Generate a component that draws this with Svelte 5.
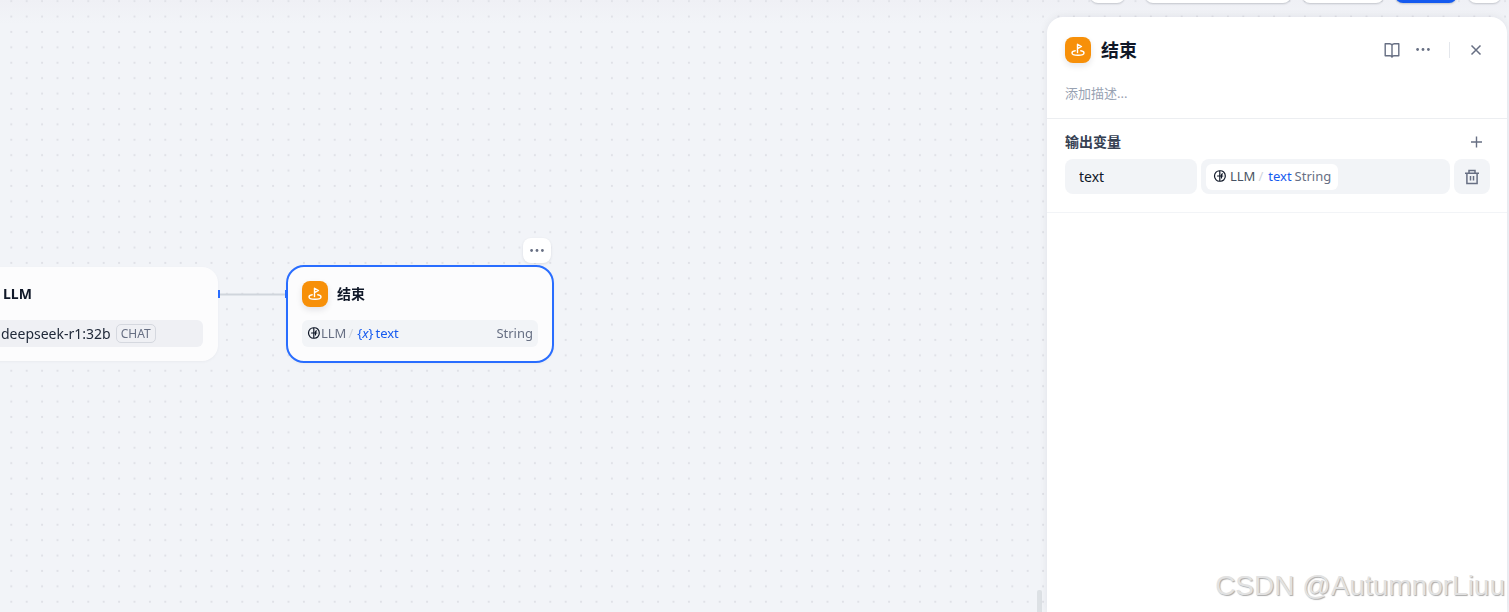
<script lang="ts">
	interface Output {
		name: string;
		source: string;
		variable: string;
		type: string;
	}

	let outputs = $state<Output[]>([
		{ name: 'text', source: 'LLM', variable: 'text', type: 'String' }
	]);
	let description = $state('');
	let open = $state(true);

	function addOutput() {
		outputs.push({ name: '', source: 'LLM', variable: 'text', type: 'String' });
	}

	function removeOutput(index: number) {
		outputs.splice(index, 1);
	}
</script>

{#snippet endIcon()}
	<span class="end-icon">
		<svg viewBox="0 0 16 16" width="16" height="16" fill="none" stroke="currentColor" stroke-width="1.4" stroke-linecap="round" stroke-linejoin="round">
			<path d="M7.5 10.5V2.3l4 2.2-4 2.2" />
			<path d="M5.2 8.8C3.2 9.1 2 9.9 2 10.9c0 1.3 2.6 2.3 6 2.3s6-1 6-2.3c0-1-1.2-1.8-3.2-2.1" />
		</svg>
	</span>
{/snippet}

{#snippet llmIcon()}
	<svg class="llm-icon" viewBox="0 0 14 14" width="14" height="14" fill="none" stroke="currentColor" stroke-width="1.2" stroke-linecap="round" stroke-linejoin="round">
		<path d="M6.8 1.8C4 1.5 1.5 4 1.5 7s2.500 5.500 5.300 5.200V1.800c3-.4 5.500 2 5.500 5.200s-2.500 5.600-5.500 5.200" />
		<path d="M6.800 7H4.500M9.500 4.800c-.8 0-1 .4-1 1.200v3M6.800 7h3" />
	</svg>
{/snippet}

{#snippet dots()}
	<svg viewBox="0 0 16 16" width="16" height="16" fill="currentColor">
		<circle cx="2.6" cy="7.5" r="1.4" /><circle cx="8" cy="7.5" r="1.4" /><circle cx="13.4" cy="7.5" r="1.4" />
	</svg>
{/snippet}

<main class="workflow">
	<svg class="grid-dots" aria-hidden="true">
		<defs>
			<pattern id="dots" x="3.6" y="-6.5" width="15.4" height="15.4" patternUnits="userSpaceOnUse">
				<circle cx="7.7" cy="7.7" r="1.1" fill="#dfe1e7" />
			</pattern>
		</defs>
		<rect width="100%" height="100%" fill="url(#dots)" />
	</svg>

	<svg class="edge" viewBox="0 0 70 10" width="70" height="10" aria-hidden="true">
		<path d="M1 5.5h68" stroke="#d0d5dc" stroke-width="2" />
		<path d="M1 1v8M68 1v8" stroke="#296dff" stroke-width="2" />
	</svg>

	<article class="node llm">
		<header><h2>LLM</h2></header>
		<div class="strip model">
			<span>deepseek-r1:32b</span>
			<span class="badge">CHAT</span>
		</div>
	</article>

	<article class="node end selected">
		<header>{@render endIcon()}<h2>结束</h2></header>
		<div class="strip variable">
			{@render llmIcon()}
			<span>LLM</span>
			<span class="slash">/</span>
			<span class="accent"><span>{'{'}<i>x</i>{'}'}</span><span>text</span></span>
			<span class="type">String</span>
		</div>
	</article>
	<button class="node-menu" aria-label="More">{@render dots()}</button>

	<nav class="toolbar">
		<button class="w35" aria-label="Environment"></button>
		<button class="w146" aria-label="Preview"></button>
		<button class="w82" aria-label="Features"></button>
		<button class="w62 primary" aria-label="Publish"></button>
		<button class="w33" aria-label="History"></button>
	</nav>

	<span class="resizer"></span>

	{#if open}
		<aside class="panel">
			<header class="panel-head">
				<div class="title-row">
					{@render endIcon()}
					<h1>结束</h1>
					<button class="icon-btn" aria-label="Help">
						<svg viewBox="0 0 18 18" width="18" height="18" fill="none" stroke="currentColor" stroke-width="1.4" stroke-linejoin="round">
							<path d="M9 4.2C8.500 3 7.700 2.700 6.700 2.700H2.200v12h4.900c1 0 1.600.3 1.900 1.500.3-1.200.9-1.500 1.900-1.500h4.900v-12h-4.500c-1 0-1.800.3-2.300 1.500v12" />
						</svg>
					</button>
					<button class="icon-btn" aria-label="More">{@render dots()}</button>
					<span class="divider"></span>
					<button class="icon-btn" aria-label="Close" onclick={() => (open = false)}>
						<svg viewBox="0 0 16 16" width="16" height="16" stroke="currentColor" stroke-width="1.5"><path d="m3.500 3.500 9 9m0-9-9 9" /></svg>
					</button>
				</div>
				<input class="description" aria-label="描述" placeholder="添加描述..." bind:value={description} />
			</header>

			<section class="outputs">
				<div class="section-head">
					<h3>输出变量</h3>
					<button class="icon-btn" aria-label="Add" onclick={addOutput}>
						<svg viewBox="0 0 16 16" width="16" height="16" stroke="currentColor" stroke-width="1.4"><path d="M8.500 2.500v11M3 8h11" /></svg>
					</button>
				</div>
				{#each outputs as output, i}
					<div class="output-row">
						<input class="field" aria-label="Name" bind:value={output.name} />
						<button class="field picker">
							<span class="tag">
								{@render llmIcon()}
								<span class="source">{output.source}</span>
								<span class="slash">/</span>
								<span class="accent">{output.variable}</span>
								<span class="type">{output.type}</span>
							</span>
						</button>
						<button class="field remove" aria-label="Delete" onclick={() => removeOutput(i)}>
							<svg viewBox="0 0 18 18" width="18" height="18" fill="none" stroke="currentColor" stroke-width="1.5">
								<path d="M2 5.200h14M3.900 5.200v10.300h10.200V5.200M6 5V2.500h6V5M7.500 8v4.500M10.500 8v4.500" />
							</svg>
						</button>
					</div>
				{/each}
			</section>
		</aside>
	{/if}

	<span class="watermark">CSDN @AutumnorLiuu</span>
</main>

<style>
	:global(body) { background: #f2f4f7; }

	.workflow {
		position: relative;
		min-height: 100vh;
		overflow: hidden;
		background: linear-gradient(#eff0f5, #f2f4f8 24px);
		color: #101828;
		font-family: 'Noto Sans', 'Noto Sans CJK SC', sans-serif;
		font-size: 13px;
	}

	h1, h2, h3 { margin: 0; }

	button, input {
		box-sizing: border-box;
		padding: 0;
		border: none;
		background: none;
		color: inherit;
		font: inherit;
	}
	button { cursor: pointer; }
	input { outline: none; }
	svg { display: block; flex-shrink: 0; }

	.grid-dots {
		position: absolute;
		inset: 0;
		width: 100%;
		height: 100%;
	}

	.edge {
		position: absolute;
		left: 218px;
		top: 289px;
		z-index: 1;
	}

	.node {
		position: absolute;
		box-sizing: border-box;
		width: 268px;
		padding: 14px;
		border: 2px solid transparent;
		border-radius: 18px;
		background: #fcfcfd;
		background-clip: padding-box;
		filter: drop-shadow(0 1px 1px rgba(16, 24, 40, 0.04));
	}
	.node.llm { left: -48px; top: 265px; }
	.node.end { left: 286px; top: 265px; }
	.node.selected { border-color: #296dff; }

	.node header {
		display: flex;
		align-items: center;
		gap: 9px;
		height: 26px;
	}
	.node h2 {
		font-size: 14px;
		font-weight: 600;
		line-height: 20px;
	}
	.node.llm header { padding-left: 35px; }
	.node.llm h2 { font-weight: 700; }

	.strip {
		display: flex;
		align-items: center;
		height: 27px;
		margin-top: 13px;
		padding: 0 5px;
		border-radius: 6px;
		background: #f2f4f7;
		color: #676f83;
		line-height: 16px;
	}
	.strip.model {
		gap: 5px;
		margin-right: 1px;
		padding-left: 33px;
		background: #eff0f4;
		color: #202939;
		font-size: 14px;
	}
	.strip.variable { padding-bottom: 1px; height: 26px; }
	.strip .accent { display: flex; gap: 2px; }
	.strip .type { margin-left: auto; }

	.badge {
		box-sizing: border-box;
		height: 19px;
		padding: 0 4px;
		border: 1px solid #d5d8df;
		border-radius: 5px;
		color: #676f83;
		font-size: 12px;
		line-height: 17px;
	}

	.accent { color: #155aef; }
	.slash { margin: 0 4px 0 2px; color: #d0d5dc; }

	.llm-icon { color: #101828; }

	.end-icon {
		display: flex;
		align-items: center;
		justify-content: center;
		width: 26px;
		height: 26px;
		border-radius: 8px;
		background: #f79009;
		color: #fff;
		box-shadow: 0 3px 6px rgba(16, 24, 40, 0.1);
	}

	.node-menu {
		position: absolute;
		left: 523px;
		top: 238px;
		display: flex;
		align-items: center;
		justify-content: center;
		width: 28px;
		height: 25px;
		border-radius: 8px;
		background: #fff;
		color: #676f83;
		box-shadow: 0 1px 3px rgba(16, 24, 40, 0.1);
	}

	.toolbar {
		position: absolute;
		right: 8px;
		top: -29px;
		display: flex;
		gap: 11px;
	}
	.toolbar button {
		height: 32px;
		border-radius: 8px;
		background: #fff;
		box-shadow: 0 1px 2px rgba(16, 24, 40, 0.2);
	}
	.toolbar .primary { background: #155aef; }
	.w33 { width: 33px; }
	.w35 { width: 35px; margin-right: 9px; }
	.w62 { width: 62px; }
	.w82 { width: 82px; }
	.w146 { width: 146px; }

	.resizer {
		position: absolute;
		right: 467px;
		bottom: -6px;
		width: 5px;
		height: 28px;
		border-radius: 2px;
		background: #dde1e5;
	}

	.panel {
		position: absolute;
		top: 17px;
		right: 2px;
		bottom: 0;
		width: 460px;
		border-radius: 16px 16px 0 0;
		background: #fff;
		box-shadow: 0 0 8px rgba(16, 24, 40, 0.08);
	}

	.panel-head {
		padding: 20px 17px 15px 18px;
		border-bottom: 1px solid #eceef1;
	}

	.title-row {
		display: flex;
		align-items: center;
		height: 26px;
	}
	.title-row h1 {
		flex: 1;
		margin-left: 10px;
		font-size: 18px;
		font-weight: 700;
		line-height: 26px;
	}

	.icon-btn {
		display: flex;
		align-items: center;
		justify-content: center;
		width: 28px;
		height: 26px;
		color: #676f83;
	}
	.title-row .icon-btn + .icon-btn { margin-left: 3px; }

	.divider {
		width: 1px;
		height: 16px;
		margin: 0 12px;
		background: #e4e7ec;
	}

	.description {
		display: block;
		width: 100%;
		height: 20px;
		margin-top: 20px;
		font-size: 13px;
	}
	.description::placeholder { color: #98a2b2; opacity: 1; }

	.outputs {
		padding: 10px 17px 18px 18px;
		border-bottom: 1px solid #f2f4f7;
	}

	.section-head {
		display: flex;
		align-items: center;
		justify-content: space-between;
		height: 26px;
		margin-bottom: 4px;
	}
	.section-head h3 {
		color: #354052;
		font-size: 14px;
		font-weight: 600;
		line-height: 20px;
	}

	.output-row {
		display: grid;
		grid-template-columns: 132px 1fr 36px;
		gap: 4px;
	}

	.field {
		width: 100%;
		height: 35px;
		border-radius: 8px;
		background: #f2f4f7;
	}
	input.field { padding: 0 14px; font-size: 14px; }

	.picker {
		display: flex;
		align-items: center;
		padding: 0 5px;
	}

	.tag {
		display: flex;
		align-items: center;
		box-sizing: border-box;
		height: 26px;
		padding: 0 7px 2px;
		border-radius: 6px;
		background: #fff;
		line-height: 16px;
	}
	.tag .source { margin-left: 3px; color: #495464; }
	.tag .slash { margin: 0 5px 0 3px; }
	.tag .type { margin-left: 3px; color: #676f83; }

	.remove {
		display: flex;
		align-items: center;
		justify-content: center;
		color: #676f83;
	}

	.watermark {
		position: absolute;
		right: 4px;
		bottom: 10px;
		color: #e2e2e2;
		font-family: 'Liberation Sans', sans-serif;
		font-size: 28px;
		line-height: 32px;
		text-shadow: 1px 1px 1px #aaa, -1px -1px 1px #fff;
		pointer-events: none;
	}
</style>
